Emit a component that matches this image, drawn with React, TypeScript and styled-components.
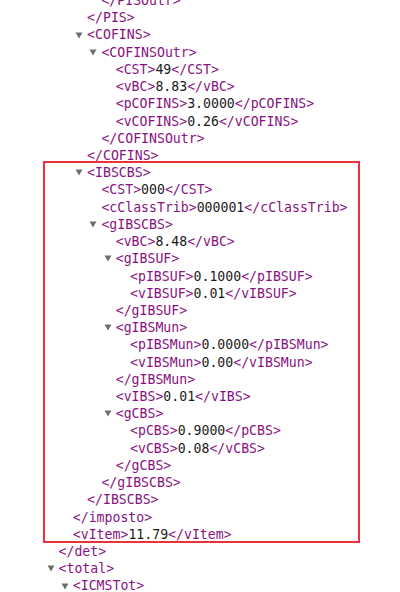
import React from "react";
import styled, { createGlobalStyle } from "styled-components";

const Global = createGlobalStyle`
  html, body { margin: 0; padding: 0; background: #ffffff; }
  body { width: 400px; height: 592px; overflow: hidden; }
`;

const Viewer = styled.div`
  position: relative;
  margin-top: -8px;
  font-family: "DejaVu Sans Mono", "Liberation Mono", monospace;
  font-size: 13.2px;
  line-height: 17.22px;
  color: #1a1a1a;
`;

const Row = styled.div<{ $level: number }>`
  display: flex;
  align-items: center;
  height: 17.22px;
  padding-left: ${(p) => 58.5 + 14.3 * p.$level}px;
  white-space: pre;
`;

const Toggle = styled.span`
  display: inline-flex;
  align-items: center;
  width: 12px;
  margin-left: -12px;
  height: 100%;
  color: #6e6e6e;
`;

const Tag = styled.span`
  color: #881280;
`;

const Value = styled.span`
  color: #1a1a1a;
`;

const Highlight = styled.div`
  position: absolute;
  left: 43px;
  top: 169px;
  width: 317px;
  height: 382px;
  box-sizing: border-box;
  border: 2px solid #e8333c;
  pointer-events: none;
`;

type Line = { level: number; open?: boolean; tag?: string; close?: string; value?: string };

const lines: Line[] = [
  { level: 3, close: "PISOutr" },
  { level: 2, close: "PIS" },
  { level: 2, open: true, tag: "COFINS" },
  { level: 3, open: true, tag: "COFINSOutr" },
  { level: 4, tag: "CST", value: "49", close: "CST" },
  { level: 4, tag: "vBC", value: "8.83", close: "vBC" },
  { level: 4, tag: "pCOFINS", value: "3.0000", close: "pCOFINS" },
  { level: 4, tag: "vCOFINS", value: "0.26", close: "vCOFINS" },
  { level: 3, close: "COFINSOutr" },
  { level: 2, close: "COFINS" },
  { level: 2, open: true, tag: "IBSCBS" },
  { level: 3, tag: "CST", value: "000", close: "CST" },
  { level: 3, tag: "cClassTrib", value: "000001", close: "cClassTrib" },
  { level: 3, open: true, tag: "gIBSCBS" },
  { level: 4, tag: "vBC", value: "8.48", close: "vBC" },
  { level: 4, open: true, tag: "gIBSUF" },
  { level: 5, tag: "pIBSUF", value: "0.1000", close: "pIBSUF" },
  { level: 5, tag: "vIBSUF", value: "0.01", close: "vIBSUF" },
  { level: 4, close: "gIBSUF" },
  { level: 4, open: true, tag: "gIBSMun" },
  { level: 5, tag: "pIBSMun", value: "0.0000", close: "pIBSMun" },
  { level: 5, tag: "vIBSMun", value: "0.00", close: "vIBSMun" },
  { level: 4, close: "gIBSMun" },
  { level: 4, tag: "vIBS", value: "0.01", close: "vIBS" },
  { level: 4, open: true, tag: "gCBS" },
  { level: 5, tag: "pCBS", value: "0.9000", close: "pCBS" },
  { level: 5, tag: "vCBS", value: "0.08", close: "vCBS" },
  { level: 4, close: "gCBS" },
  { level: 3, close: "gIBSCBS" },
  { level: 2, close: "IBSCBS" },
  { level: 1, close: "imposto" },
  { level: 1, tag: "vItem", value: "11.79", close: "vItem" },
  { level: 0, close: "det" },
  { level: 0, open: true, tag: "total" },
  { level: 1, open: true, tag: "ICMSTot" },
];

const Arrow = () => (
  <svg width="8" height="7" viewBox="0 0 8 7">
    <path d="M0.5 0.5 L7.5 0.5 L4 6.5 Z" fill="currentColor" />
  </svg>
);

export default function App() {
  return (
    <>
      <Global />
      <Viewer>
        {lines.map((l, i) => (
          <Row key={i} $level={l.level}>
            {l.open && (
              <Toggle>
                <Arrow />
              </Toggle>
            )}
            {l.tag && <Tag>{`<${l.tag}>`}</Tag>}
            {l.value && <Value>{l.value}</Value>}
            {l.close && <Tag>{`</${l.close}>`}</Tag>}
          </Row>
        ))}
        <Highlight />
      </Viewer>
    </>
  );
}
